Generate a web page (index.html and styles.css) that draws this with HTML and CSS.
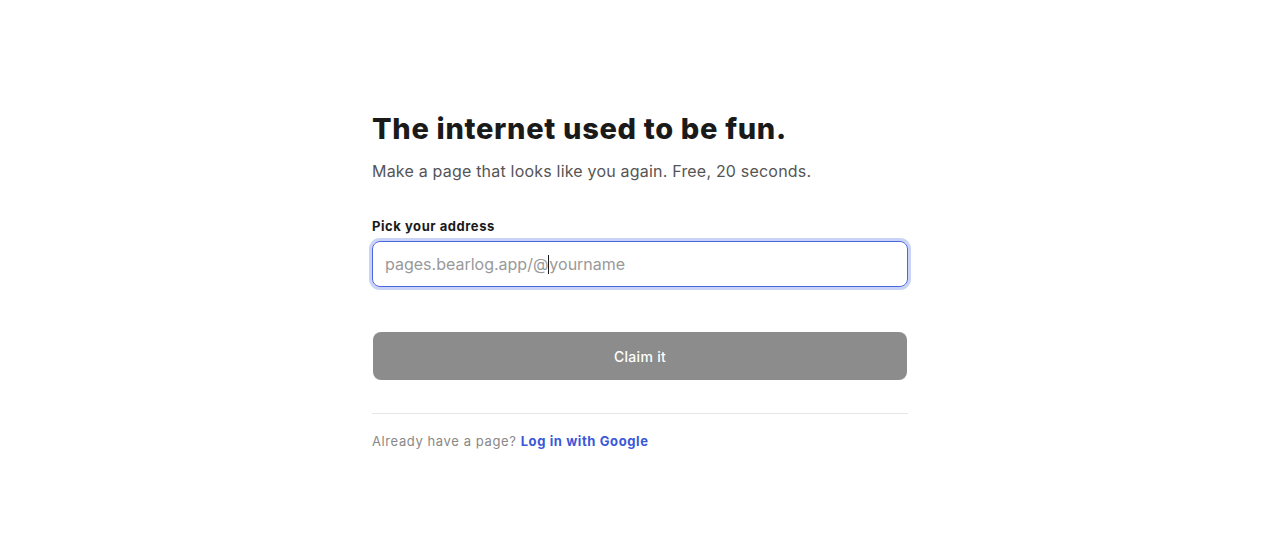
FILE: index.html
```html
<!DOCTYPE html>
<html lang="en">
<head>
<meta charset="utf-8">
<title>Claim your page</title>
<link rel="stylesheet" href="styles.css">
</head>
<body>
<main class="wrap">
  <h1 class="title">The internet used to be fun.</h1>
  <p class="lead">Make a page that looks like you again. Free, 20 seconds.</p>
  <label class="label" for="addr">Pick your address</label>
  <div class="field">
    <span class="prefix">pages.bearlog.app/@</span><span class="caret"></span><input id="addr" class="input" type="text" placeholder="yourname">
  </div>
  <button class="btn" type="button">Claim it</button>
  <hr class="rule">
  <p class="foot">Already have a page? <a class="link" href="#">Log in with Google</a></p>
</main>
</body>
</html>
```

FILE: styles.css
```css
html, body {
  margin: 0;
  padding: 0;
  background: #ffffff;
}
body {
  font-family: Inter, "Noto Sans", sans-serif;
  color: #1a1a1a;
}
.wrap {
  width: 536px;
  margin: 0 auto;
  padding-top: 109px;
  display: flex;
  flex-direction: column;
}
.title {
  margin: 0;
  font-size: 29px;
  line-height: 40px;
  font-weight: 800;
  color: #1a1a1a;
  letter-spacing: 0.68px;
}
.lead {
  margin: 11px 0 0;
  font-size: 16px;
  line-height: 22px;
  color: #555555;
  letter-spacing: 0.2px;
}
.label {
  margin-top: 35px;
  font-size: 13px;
  line-height: 18px;
  font-weight: 700;
  color: #1a1a1a;
  letter-spacing: 0.55px;
}
.field {
  margin-top: 6px;
  height: 46px;
  box-sizing: border-box;
  border: 1.5px solid #4a67e0;
  border-radius: 8px;
  box-shadow: 0 0 0 3px #c9d3f7;
  display: flex;
  align-items: center;
  padding: 0 12px;
  font-size: 16px;
  color: #999999;
}
.prefix {
  white-space: nowrap;
}
.caret {
  width: 1px;
  height: 19px;
  background: #1a1a1a;
}
.input {
  flex: 1;
  min-width: 0;
  border: 0;
  outline: 0;
  padding: 0;
  font: inherit;
  color: #1a1a1a;
  background: transparent;
}
.input::placeholder {
  color: #999999;
}
.btn {
  margin-top: 45px;
  margin-left: 1px;
  margin-right: 1px;
  height: 48px;
  border: 0;
  border-radius: 8px;
  background: #8c8c8c;
  color: #ffffff;
  font-family: inherit;
  font-size: 14px;
  font-weight: 500;
  letter-spacing: 0.3px;
}
.rule {
  margin: 33px 0 0;
  border: 0;
  border-top: 1px solid #e6e6e6;
  height: 0;
}
.foot {
  margin: 18px 0 0;
  font-size: 13px;
  line-height: 18px;
  color: #888888;
  letter-spacing: 0.6px;
}
.link {
  color: #3a58d8;
  font-weight: 700;
  text-decoration: none;
}
```
